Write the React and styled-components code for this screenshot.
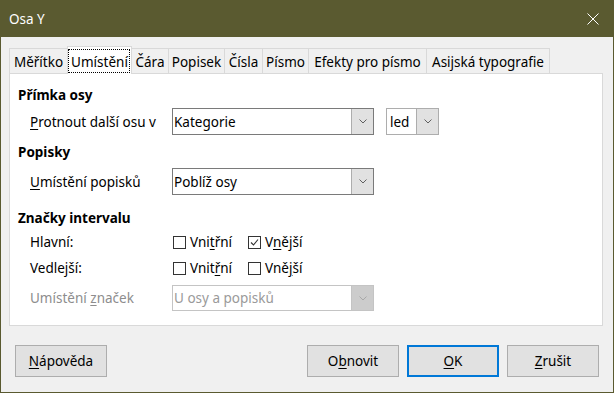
import React from 'react';
import styled, { createGlobalStyle } from 'styled-components';

const GlobalStyle = createGlobalStyle`
  html, body {
    margin: 0;
    padding: 0;
    background: #f0f0f0;
  }
  body {
    font-family: "Noto Sans", "Open Sans", Arial, sans-serif;
    font-size: 13.5px;
    line-height: 18px;
    color: #000;
  }
`;

const Window = styled.div`
  box-sizing: border-box;
  width: 614px;
  height: 393px;
  display: flex;
  flex-direction: column;
  background: #f0f0f0;
  border: 1px solid #5a5a30;
  border-top: none;
`;

const TitleBar = styled.div`
  height: 37px;
  margin: 0 -1px;
  padding: 0 15px 0 9px;
  display: flex;
  align-items: center;
  justify-content: space-between;
  background: #5a5a30;
  color: #fff;
`;

const CloseButton = styled.div`
  width: 12px;
  height: 12px;
  display: flex;
`;

const TabBar = styled.div`
  display: flex;
  align-items: flex-end;
  margin: 9px 0 0 8px;
  height: 27px;
`;

const Tab = styled.div`
  position: relative;
  box-sizing: border-box;
  width: ${(p) => p.$w}px;
  height: ${(p) => (p.$active ? 28 : 25)}px;
  margin-right: -1px;
  margin-bottom: ${(p) => (p.$active ? -1 : 0)}px;
  padding-bottom: ${(p) => (p.$active ? 3 : 2)}px;
  display: flex;
  align-items: flex-end;
  justify-content: center;
  border: 1px solid #d9d9d9;
  border-bottom: none;
  background: ${(p) => (p.$active ? '#fff' : '#f0f0f0')};
  z-index: ${(p) => (p.$active ? 2 : 1)};
  white-space: nowrap;

  &::after {
    content: '';
    display: ${(p) => (p.$active ? 'block' : 'none')};
    position: absolute;
    inset: 2px 1px 1px 0;
    border: 1px dotted #000;
  }
`;

const Panel = styled.div`
  box-sizing: border-box;
  height: 253px;
  margin: 0 10px 0 8px;
  padding: 12px 8px 0;
  display: flex;
  flex-direction: column;
  background: #fff;
  border: 1px solid #d9d9d9;
`;

const Heading = styled.div`
  font-weight: 700;
  height: 18px;
  margin-top: ${(p) => p.$mt || 0}px;
`;

const Row = styled.div`
  display: grid;
  grid-template-columns: 142px auto;
  align-items: center;
  padding-left: 12px;
  height: ${(p) => p.$h}px;
  margin-top: ${(p) => p.$mt || 0}px;
`;

const Label = styled.div`
  color: ${(p) => (p.$disabled ? '#8d8d8d' : '#000')};
  white-space: nowrap;
`;

const Controls = styled.div`
  display: flex;
  align-items: center;
  gap: 12px;
`;

const Combo = styled.div`
  box-sizing: border-box;
  width: ${(p) => p.$w}px;
  height: ${(p) => p.$h || 27}px;
  display: flex;
  background: #fff;
  border: 1px solid ${(p) => p.$border};
  color: ${(p) => (p.$disabled ? '#9a9a9a' : '#000')};
`;

const ComboText = styled.div`
  flex: 1;
  display: flex;
  align-items: center;
  padding-left: ${(p) => p.$pl || 1}px;
  white-space: nowrap;
`;

const ComboButton = styled.div`
  width: 21px;
  display: flex;
  align-items: center;
  justify-content: center;
  background: ${(p) => (p.$disabled ? '#cccccc' : '#e1e1e1')};
  border-left: 1px solid ${(p) => (p.$disabled ? '#c4c4c4' : '#adadad')};
`;

const CheckGroup = styled.div`
  display: flex;
  align-items: center;
  margin-left: 1px;
`;

const CheckItem = styled.label`
  display: flex;
  align-items: center;
  gap: 4px;
  width: ${(p) => p.$w || 'auto'};
  white-space: nowrap;
`;

const Box = styled.span`
  box-sizing: border-box;
  width: 13px;
  height: 13px;
  display: flex;
  align-items: center;
  justify-content: center;
  border: 1px solid #333;
  background: #fff;
`;

const Mn = styled.span`
  text-decoration: underline;
  text-underline-offset: 2px;
  text-decoration-thickness: 1px;
`;

const ButtonRow = styled.div`
  display: flex;
  align-items: center;
  gap: 8px;
  margin-top: 19px;
  padding: 0 14px;
`;

const Spacer = styled.div`
  flex: 1;
`;

const Button = styled.div`
  box-sizing: border-box;
  width: 92px;
  height: 32px;
  display: flex;
  align-items: center;
  justify-content: center;
  background: #e1e1e1;
  border: ${(p) => (p.$default ? '2px solid #0078d7' : '1px solid #adadad')};
`;

const Chevron = ({ color = '#606060' }) => (
  <svg width="8" height="5" viewBox="0 0 8 5">
    <path d="M0.5 0.5 L4 4 L7.5 0.5" fill="none" stroke={color} strokeWidth="1" />
  </svg>
);

const CheckBox = ({ checked }) => (
  <Box>
    {checked && (
      <svg width="9" height="9" viewBox="0 0 9 9">
        <path d="M1 4.5 L3.5 7 L8 1.5" fill="none" stroke="#333" strokeWidth="1.1" />
      </svg>
    )}
  </Box>
);

const tabs = [
  { label: 'Měřítko', w: 59 },
  { label: 'Umístění', w: 65, active: true },
  { label: 'Čára', w: 38 },
  { label: 'Popisek', w: 57 },
  { label: 'Čísla', w: 39 },
  { label: 'Písmo', w: 47 },
  { label: 'Efekty pro písmo', w: 119 },
  { label: 'Asijská typografie', w: 124 },
];

export default function App() {
  return (
    <>
      <GlobalStyle />
      <Window>
        <TitleBar>
          <span>Osa Y</span>
          <CloseButton>
            <svg width="12" height="12" viewBox="0 0 12 12">
              <path d="M0.5 0.5 L11.5 11.5 M11.5 0.5 L0.5 11.5" stroke="#fff" strokeWidth="1" />
            </svg>
          </CloseButton>
        </TitleBar>

        <TabBar>
          {tabs.map((t) => (
            <Tab key={t.label} $w={t.w} $active={t.active}>
              {t.label}
            </Tab>
          ))}
        </TabBar>

        <Panel>
          <Heading>Přímka osy</Heading>
          <Row $h={27} $mt={4}>
            <Label>
              <Mn>P</Mn>rotnout další osu v
            </Label>
            <Controls>
              <Combo $w={202} $border="#7a7a7a">
                <ComboText>Kategorie</ComboText>
                <ComboButton>
                  <Chevron />
                </ComboButton>
              </Combo>
              <Combo $w={53} $border="#adadad">
                <ComboText $pl={3}>led</ComboText>
                <ComboButton>
                  <Chevron />
                </ComboButton>
              </Combo>
            </Controls>
          </Row>

          <Heading $mt={8}>Popisky</Heading>
          <Row $h={27} $mt={7}>
            <Label>
              <Mn>U</Mn>místění popisků
            </Label>
            <Controls>
              <Combo $w={202} $border="#7a7a7a">
                <ComboText>Poblíž osy</ComboText>
                <ComboButton>
                  <Chevron />
                </ComboButton>
              </Combo>
            </Controls>
          </Row>

          <Heading $mt={14}>Značky intervalu</Heading>
          <Row $h={26} $mt={2}>
            <Label>Hlavní:</Label>
            <CheckGroup>
              <CheckItem $w="75px">
                <CheckBox />
                <span>
                  Vni<Mn>t</Mn>řní
                </span>
              </CheckItem>
              <CheckItem>
                <CheckBox checked />
                <span>
                  V<Mn>n</Mn>ější
                </span>
              </CheckItem>
            </CheckGroup>
          </Row>
          <Row $h={26}>
            <Label>Vedlejší:</Label>
            <CheckGroup>
              <CheckItem $w="75px">
                <CheckBox />
                <span>
                  Vnit<Mn>ř</Mn>ní
                </span>
              </CheckItem>
              <CheckItem>
                <CheckBox />
                <span>
                  Vně<Mn>j</Mn>ší
                </span>
              </CheckItem>
            </CheckGroup>
          </Row>
          <Row $h={26} $mt={4}>
            <Label $disabled>
              Umístění <Mn>z</Mn>naček
            </Label>
            <Controls>
              <Combo $w={202} $h={26} $border="#c4c4c4" $disabled>
                <ComboText>U osy a popisků</ComboText>
                <ComboButton $disabled>
                  <Chevron color="#a8a8a8" />
                </ComboButton>
              </Combo>
            </Controls>
          </Row>
        </Panel>

        <ButtonRow>
          <Button>
            <span>
              <Mn>N</Mn>ápověda
            </span>
          </Button>
          <Spacer />
          <Button>
            <span>
              O<Mn>b</Mn>novit
            </span>
          </Button>
          <Button $default>
            <span>
              <Mn>O</Mn>K
            </span>
          </Button>
          <Button>
            <span>
              <Mn>Z</Mn>rušit
            </span>
          </Button>
        </ButtonRow>
      </Window>
    </>
  );
}
